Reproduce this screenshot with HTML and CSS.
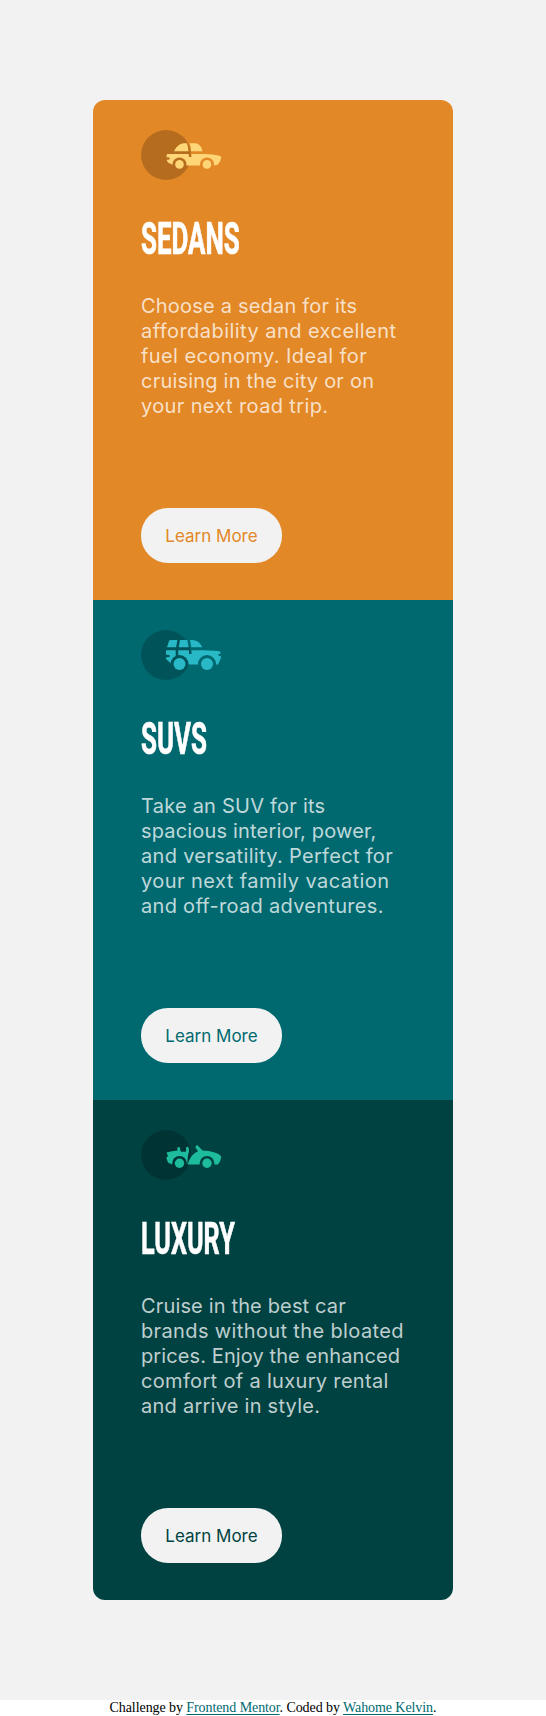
FILE: index.html
```html
<!DOCTYPE html>
<html lang="en">
<head>
<meta charset="utf-8">
<title>3-column preview card</title>
<link rel="stylesheet" href="styles.css">
</head>
<body>
<main class="page">
  <div class="cards">
    <section class="card sedans">
      <svg class="icon" viewBox="0 0 80 50" aria-hidden="true">
        <defs><mask id="m1"><rect width="80" height="50" fill="#fff"/><path d="M46.7 11Q49.3 18 49.2 27" fill="none" stroke="#000" stroke-width="2.6"/><circle cx="38.5" cy="34.4" r="7"/><circle cx="66" cy="34.4" r="7"/><path d="M24 27.3h3q2 .2 2 1.2t-2 1.2h-3z"/></mask></defs>
        <circle cx="25" cy="25" r="25" fill="#000" opacity=".2"/>
        <g fill="currentColor"><g mask="url(#m1)"><path d="M33 21.2Q37 13.3 43 13.3H54Q59.8 13.3 61.5 21.2zM26 24H63Q75 24.2 80 26.5Q80.3 31 77 34.5Q75 35.5 71 35.5H33L27 32.5L25 29z"/></g><circle cx="38.5" cy="34.4" r="4.3"/><circle cx="66" cy="34.4" r="4.3"/></g>
      </svg>
      <h2 class="title">SEDANS</h2>
      <p class="text"><span class="l1">Choose a sedan for its</span> <span class="l2">affordability and excellent</span> <span class="l3">fuel economy. Ideal for</span> <span class="l4">cruising in the city or on</span> <span class="l5">your next road trip.</span></p>
      <a class="button"><span>Learn More</span></a>
    </section>
    <section class="card suvs">
      <svg class="icon" viewBox="0 0 80 50" aria-hidden="true">
        <defs><mask id="m2"><rect width="80" height="50" fill="#fff"/><path d="M47.2 8Q49.5 17 49.3 24M37.8 9L36 20V28" fill="none" stroke="#000" stroke-width="2.6"/><circle cx="38.5" cy="34" r="9"/><circle cx="66" cy="34" r="9"/><path d="M24 24.8h3q2 .2 2 1.2t-2 1.2h-3zM77 24h4v2h-3z"/></mask></defs>
        <circle cx="25" cy="25" r="25" fill="#000" opacity=".2"/>
        <g fill="currentColor"><g mask="url(#m2)"><path d="M26 17.3L28 11Q28.4 10 30 10H51Q58 10 61.3 17.3zM25 20.2H62Q75 20.5 79.2 21.5L80 28L77 34.5H31L25 29z"/></g><circle cx="38.5" cy="34" r="6"/><circle cx="66" cy="34" r="6"/></g>
      </svg>
      <h2 class="title">SUVS</h2>
      <p class="text"><span class="l1">Take an SUV for its</span> <span class="l2">spacious interior, power,</span> <span class="l3">and versatility. Perfect for</span> <span class="l4">your next family vacation</span> <span class="l5">and off-road adventures.</span></p>
      <a class="button"><span>Learn More</span></a>
    </section>
    <section class="card luxury">
      <svg class="icon" viewBox="0 0 80 50" aria-hidden="true">
        <defs><mask id="m3"><rect width="80" height="50" fill="#fff"/><circle cx="38.5" cy="33.2" r="7.3"/><circle cx="66" cy="33.2" r="7.3"/></mask></defs>
        <circle cx="25" cy="25" r="25" fill="#000" opacity=".2"/>
        <g fill="currentColor"><g mask="url(#m3)"><path d="M25.5 22.5Q31 21 36.5 20.5L36.3 18.2Q36.5 16.8 38 17Q39.3 17.2 39.3 20.5L40 21.7H44.3Q45.7 21.5 45 18.5Q44.8 16.7 46.5 16.8Q48.3 17.2 48 21.5Q46.5 26 46.3 34L31 34.5L27 32.5L25.3 28L27 26zM46.8 34.5Q49 24.5 57 21.2L54.5 17.6Q54.3 15.2 56.5 15.3L61.5 20.5Q75 21 80 26Q80.3 31 77 34.5z"/></g><circle cx="38.5" cy="33.2" r="4.7"/><circle cx="66" cy="33.2" r="4.7"/></g>
      </svg>
      <h2 class="title">LUXURY</h2>
      <p class="text"><span class="l1">Cruise in the best car</span> <span class="l2">brands without the bloated</span> <span class="l3">prices. Enjoy the enhanced</span> <span class="l4">comfort of a luxury rental</span> <span class="l5">and arrive in style.</span></p>
      <a class="button"><span>Learn More</span></a>
    </section>
  </div>
</main>
<footer class="footer">Challenge by <a class="link">Frontend Mentor</a>. Coded by <a class="link">Wahome Kelvin</a>.</footer>
</body>
</html>
```

FILE: styles.css
```css
* { box-sizing: border-box; }
body { margin: 0; background: #fff; }
.page { background: #f2f2f2; padding: 100px 93px; height: 1700px; }
.cards { border-radius: 12px; overflow: hidden; }
.card { height: 500px; padding: 30px 48px 37px; display: flex; flex-direction: column; align-items: flex-start; }
.sedans { background: #e38826; color: #e38826; }
.suvs { background: #006970; color: #006970; }
.luxury { background: #004241; color: #004241; }
.icon { width: 80px; height: 50px; display: block; }
.sedans .icon { color: #ffd677; }
.suvs .icon { color: #28b8c6; }
.luxury .icon { color: #1dbc9f; }
.title { margin: 33px 0 0; font: 700 45px/52px Roboto, sans-serif; color: #fff; -webkit-text-stroke: .7px #fff; white-space: nowrap; transform-origin: 0 50%; transform: scaleX(.576); }
.luxury .title { transform: scaleX(.561); }
.text { margin: 29px 0 0; font: 400 20px/25px Inter, sans-serif; color: rgba(255,255,255,.75); }
.text span { display: block; width: max-content; white-space: nowrap; }
.sedans .l1 { letter-spacing: .2px; }
.sedans .l2 { letter-spacing: .45px; }
.sedans .l3 { letter-spacing: .41px; }
.sedans .l4 { letter-spacing: .21px; }
.sedans .l5 { letter-spacing: .37px; }
.suvs .l1 { letter-spacing: .23px; }
.suvs .l2 { letter-spacing: .17px; }
.suvs .l3 { letter-spacing: .32px; }
.suvs .l4 { letter-spacing: .45px; }
.suvs .l5 { letter-spacing: .3px; }
.luxury .l1 { letter-spacing: .15px; }
.luxury .l2 { letter-spacing: .37px; }
.luxury .l3 { letter-spacing: .1px; }
.luxury .l4 { letter-spacing: .33px; }
.luxury .l5 { letter-spacing: .25px; }
.button { margin-top: auto; width: 141px; height: 55px; border-radius: 27px; background: #f2f2f2; display: flex; align-items: center; justify-content: center; font: 400 17px/20px Inter, sans-serif; letter-spacing: 0; }
.footer { font: 14px/16px "Liberation Serif", serif; letter-spacing: -.08px; height: 16px; text-align: center; color: #000; white-space: nowrap; }
.link { color: #006970; text-decoration: underline; text-underline-offset: 2px; }
```
